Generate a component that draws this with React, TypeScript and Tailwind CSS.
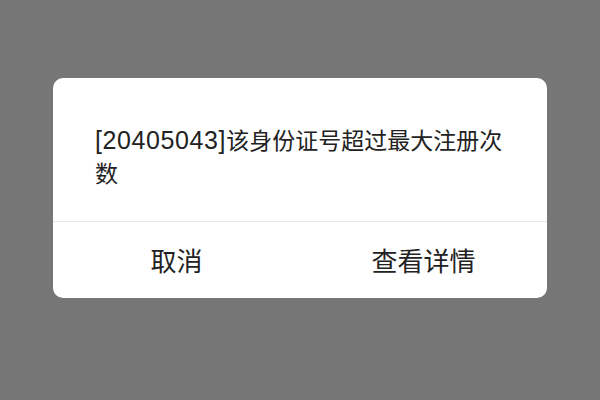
export default function App() {
  return (
    <div className="w-[600px] h-[400px] bg-[#767676] flex justify-center pt-[78px]">
      <div className="w-[494px] h-[220px] bg-white rounded-[10px] flex flex-col overflow-hidden text-[#222]" style={{ fontFamily: '"Liberation Sans", "Noto Sans CJK SC", sans-serif' }}>
        <div className="h-[144px] pt-[46px] pl-[42px] pr-[40px] text-[23px] leading-[33px] border-b border-[#e6e6e6]">
          <span className="text-[25px] tracking-[0.6px]">[20405043]</span>该身份证号超过最大注册次数
        </div>
        <div className="flex flex-1 text-[26px]">
          <button className="flex-1 flex items-center justify-center pt-[4px]">取消</button>
          <button className="flex-1 flex items-center justify-center pt-[4px]">查看详情</button>
        </div>
      </div>
    </div>
  );
}
